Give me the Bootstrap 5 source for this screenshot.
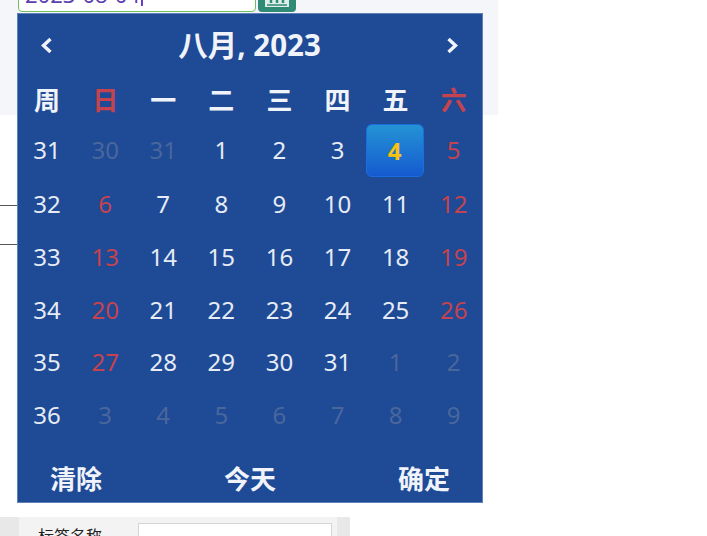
<!DOCTYPE html>
<html lang="zh"><head><meta charset="utf-8">
<link rel="stylesheet" href="https://cdn.jsdelivr.net/npm/bootstrap@5.3.0/dist/css/bootstrap.min.css">
<style>
html,body{height:536px;overflow:hidden;background:#fff}
body{position:relative;font-family:"Noto Sans","Noto Sans CJK SC",sans-serif}
.top-strip{width:498px;height:115px;background:#f5f6f9;padding-left:18px;overflow:hidden}
.date-row{margin-top:-22px;gap:2px}
.date-input{width:238px;height:34px;box-sizing:border-box;background:#fff;border:1px solid #6cc25f;border-radius:4px;font-size:22px;line-height:30px;padding-left:6px;color:#5b3fb0;white-space:nowrap}
.date-caret{display:inline-block;width:2px;height:22px;background:#6a3fc4;vertical-align:-3px;margin-left:1px}
.date-btn{width:38px;height:34px;background:#2f8a76;border-radius:4px;display:flex;align-items:flex-end;justify-content:center;padding-bottom:4px}
.rule-box{width:17px;height:40px;margin-top:90px;border-top:1px solid #555;border-bottom:1px solid #555}
.form-strip{width:350px;height:19px;margin-top:272px;background:#e8e8e8;padding:0 13px 0 19px;overflow:hidden}
.form-inner{height:100%;background:#f3f3f3;padding:6px 5px 0 19px;gap:36px;align-items:flex-start}
.form-label-txt{font-size:16px;line-height:24px;color:#222;width:64px;white-space:nowrap;font-family:"Noto Sans CJK SC",sans-serif}
.form-box{width:194px;height:30px;background:#fff;border:1px solid #d5d5d8}
.cal{position:absolute;left:17px;top:13px;width:466px;height:490px;background:#1e4a96;border:1px solid #5f80b8;color:#f0f3f9;box-sizing:border-box}
.cal-head{height:62px;padding:0 22px 0 21px;font-weight:700}
.cal-title{font-size:29.5px;line-height:1}
.cal-grid{display:grid;grid-template-columns:repeat(8,58.1px);margin-top:1px}
.wk{height:46px;font-size:26px;font-weight:700;line-height:44px;text-align:center;font-family:"Noto Sans CJK SC",sans-serif}
.dy{height:52.8px;font-size:24px;line-height:53px;text-align:center;color:#e6ebf4}
.dy.red,.wk.red{color:#c4434f}
.dy.dim{color:#4a679c}
.dy.today{background:linear-gradient(#2493d4,#155ad0);border:1px solid #1a6ee0;border-radius:6px;color:#f8c20d;font-weight:700;height:53px;width:58px;line-height:52px;margin:1px 0 0 -1px}
.cal-foot{margin-top:18px;font-size:26px;font-weight:700;padding:0 32px;font-family:"Noto Sans CJK SC",sans-serif;line-height:38px}
</style></head>
<body>
<div class="top-strip">
  <div class="d-flex date-row">
    <div class="date-input">2023-08-04<span class="date-caret"></span></div>
    <div class="date-btn"><svg width="26" height="14" viewBox="0 0 26 14"><rect x="1" y="1" width="24" height="12" fill="#dfeeea"/><path d="M7 3v6M13 3v6M19 3v6" stroke="#2f8a76" stroke-width="2.5"/><path d="M3 11h20" stroke="#2f8a76" stroke-width="1.5"/></svg></div>
  </div>
</div>
<div class="rule-box"></div>
<div class="form-strip"><div class="form-inner d-flex"><div class="form-label-txt">标签名称</div><div class="form-box"></div></div></div>

<div class="cal">
  <div class="cal-head d-flex justify-content-between align-items-center">
    <svg width="14" height="18" viewBox="0 0 14 18"><path d="M11.5 3 4.5 9.5l7 6.5" fill="none" stroke="#f0f3f9" stroke-width="3.4"/></svg>
    <span class="cal-title">八月, 2023</span>
    <svg width="14" height="18" viewBox="0 0 14 18"><path d="m2.5 3 7 6.5-7 6.5" fill="none" stroke="#f0f3f9" stroke-width="3.4"/></svg>
  </div>
  <div class="cal-grid">
    <div class="wk">周</div><div class="wk red">日</div><div class="wk">一</div><div class="wk">二</div><div class="wk">三</div><div class="wk">四</div><div class="wk">五</div><div class="wk red">六</div>
    <div class="dy">31</div><div class="dy dim">30</div><div class="dy dim">31</div><div class="dy">1</div><div class="dy">2</div><div class="dy">3</div><div class="dy today">4</div><div class="dy red">5</div>
    <div class="dy">32</div><div class="dy red">6</div><div class="dy">7</div><div class="dy">8</div><div class="dy">9</div><div class="dy">10</div><div class="dy">11</div><div class="dy red">12</div>
    <div class="dy">33</div><div class="dy red">13</div><div class="dy">14</div><div class="dy">15</div><div class="dy">16</div><div class="dy">17</div><div class="dy">18</div><div class="dy red">19</div>
    <div class="dy">34</div><div class="dy red">20</div><div class="dy">21</div><div class="dy">22</div><div class="dy">23</div><div class="dy">24</div><div class="dy">25</div><div class="dy red">26</div>
    <div class="dy">35</div><div class="dy red">27</div><div class="dy">28</div><div class="dy">29</div><div class="dy">30</div><div class="dy">31</div><div class="dy dim">1</div><div class="dy dim">2</div>
    <div class="dy">36</div><div class="dy dim">3</div><div class="dy dim">4</div><div class="dy dim">5</div><div class="dy dim">6</div><div class="dy dim">7</div><div class="dy dim">8</div><div class="dy dim">9</div>
  </div>
  <div class="cal-foot d-flex justify-content-between"><span>清除</span><span>今天</span><span>确定</span></div>
</div>
</body></html>
